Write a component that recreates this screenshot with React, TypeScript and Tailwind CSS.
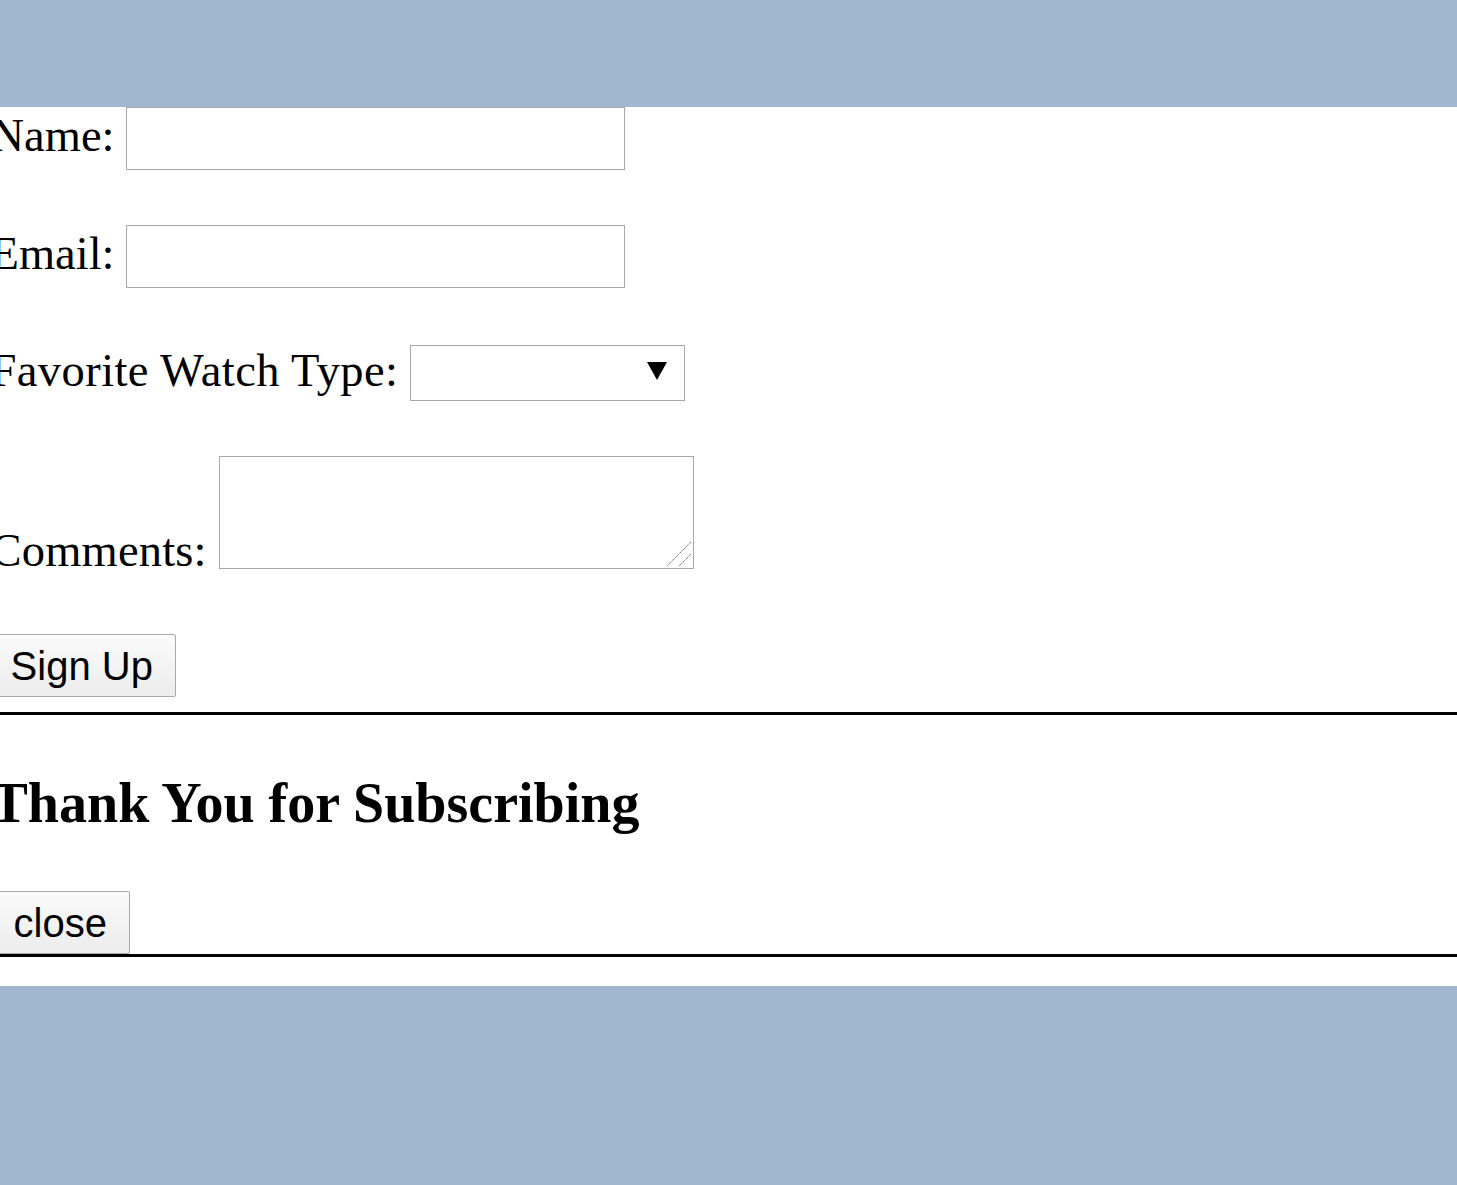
import React from "react";

const serif = { fontFamily: '"Liberation Serif", "Times New Roman", serif' };

export default function App() {
  return (
    <div className="min-h-[1185px] w-full overflow-hidden bg-[#a1b6cf]">
      <div className="h-[107px]" />
      <main className="bg-white pb-[29px] text-black" style={serif}>
        <div className="ml-[-9.5px] flex flex-col">
          {/* Name */}
          <div className="flex items-start gap-[11.6px]">
            <label className="mt-[6px] text-[46.5px] leading-none" style={serif}>
              Name:
            </label>
            <input
              type="text"
              className="h-[63px] w-[499px] border border-[#a9a9a9] bg-white outline-none"
            />
          </div>

          {/* Email */}
          <div className="mt-[55px] flex items-start gap-[11.6px]">
            <label className="mt-[6px] text-[46.5px] leading-none" style={serif}>
              Email:
            </label>
            <input
              type="email"
              className="h-[63px] w-[499px] border border-[#a9a9a9] bg-white outline-none"
            />
          </div>

          {/* Favorite Watch Type */}
          <div className="mt-[57px] flex items-start gap-[12px]">
            <label className="mt-[3px] text-[46.5px] leading-none tracking-[0.43px]" style={serif}>
              Favorite Watch Type:
            </label>
            <div className="relative h-[56px] w-[275px]">
              <select className="h-full w-full appearance-none border border-[#a9a9a9] bg-white outline-none">
                <option value=""></option>
              </select>
              <span className="pointer-events-none absolute right-[18px] top-[17px] h-0 w-0 border-x-[10px] border-t-[18px] border-x-transparent border-t-black" />
            </div>
          </div>

          {/* Comments */}
          <div className="mt-[55px] flex h-[113px] items-start gap-[12px]">
            <label className="mt-[72px] text-[46.5px] leading-none tracking-[0.2px]" style={serif}>
              Comments:
            </label>
            <div className="relative h-[113px] w-[475px]">
              <textarea className="block h-full w-full resize-none border border-[#a9a9a9] bg-white outline-none" />
              <svg
                className="pointer-events-none absolute bottom-[2px] right-[2px]"
                width="26"
                height="26"
                viewBox="0 0 26 26"
              >
                <line x1="25" y1="1" x2="1" y2="25" stroke="#777" strokeWidth="1" strokeDasharray="1.5 0.5" />
                <line x1="25" y1="13" x2="13" y2="25" stroke="#777" strokeWidth="1" strokeDasharray="1.5 0.5" />
              </svg>
            </div>
          </div>

          {/* Sign Up */}
          <div className="mt-[65px] flex">
            <button
              type="button"
              className="flex h-[63px] w-[185.5px] items-center justify-center rounded-[2px] border border-[#a9a9a9] bg-gradient-to-b from-[#fbfbfb] to-[#ececec] pr-[3px] text-[40px] leading-none text-black"
              style={{ fontFamily: '"Liberation Sans", Arial, sans-serif' }}
            >
              Sign Up
            </button>
          </div>
        </div>

        <div className="mt-[15px] h-[3px] w-full bg-black" />

        <div className="ml-[-9.5px]">
          <h2 className="mt-[60px] text-[56px] font-bold leading-none" style={serif}>
            Thank You for Subscribing
          </h2>
          <div className="mt-[60px] flex">
            <button
              type="button"
              className="flex h-[63px] w-[139.5px] items-center justify-center rounded-[2px] border border-[#a9a9a9] bg-gradient-to-b from-[#fbfbfb] to-[#ececec] text-[40px] leading-none text-black"
              style={{ fontFamily: '"Liberation Sans", Arial, sans-serif' }}
            >
              close
            </button>
          </div>
        </div>
        <div className="h-[3px] w-full bg-black" />
      </main>
    </div>
  );
}
